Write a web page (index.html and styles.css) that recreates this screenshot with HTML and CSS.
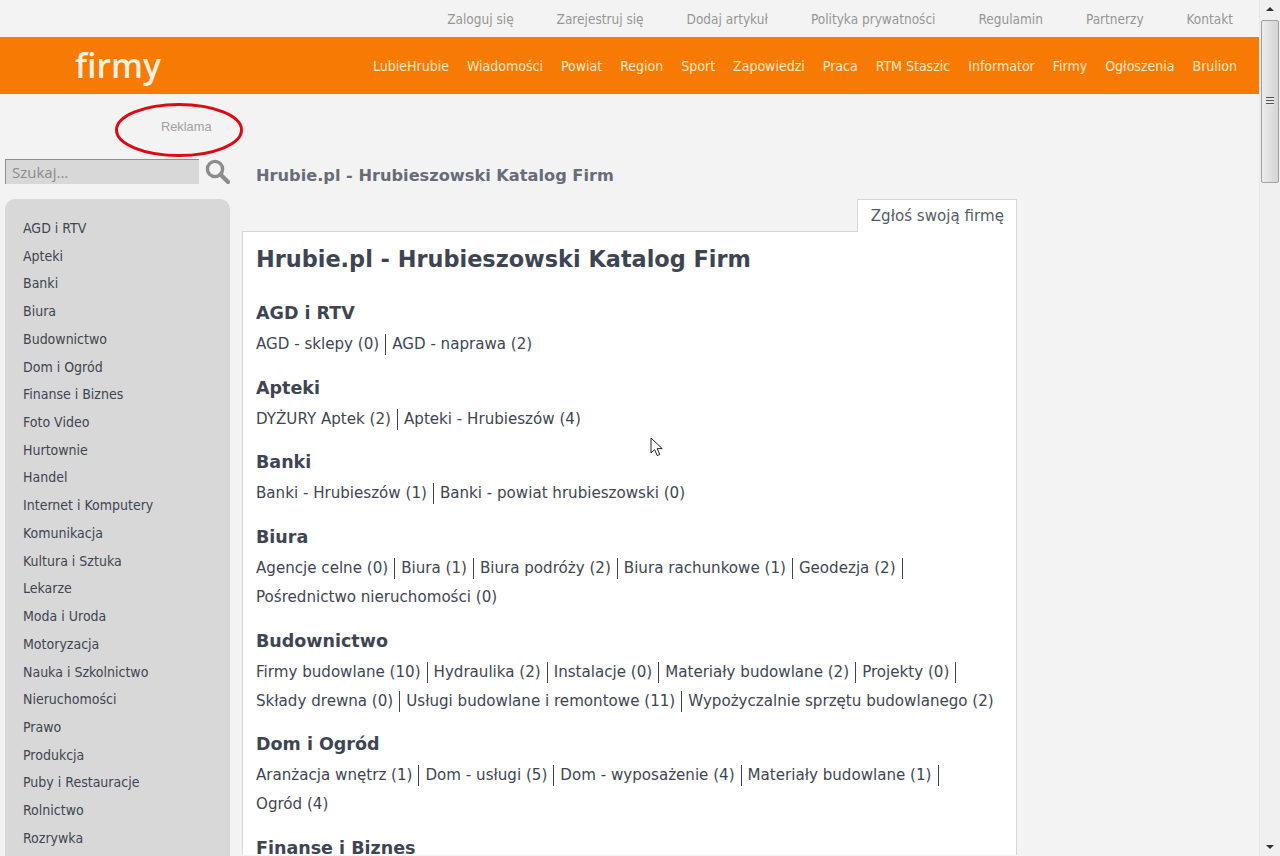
FILE: index.html
```html
<!DOCTYPE html>
<html lang="pl">
<head>
    <meta charset="UTF-8">
    <meta name="viewport" content="width=device-width, initial-scale=1.0">
    <title>Hrubie.pl - Hrubieszowski Katalog Firm</title>
    <link rel="stylesheet" href="styles.css">
</head>
<body>
<div class="viewport">
    <div class="page">
        <div class="top-links">
            <a>Zaloguj się</a>
            <a>Zarejestruj się</a>
            <a>Dodaj artykuł</a>
            <a>Polityka prywatności</a>
            <a>Regulamin</a>
            <a>Partnerzy</a>
            <a>Kontakt</a>
        </div>
        <div class="header">
            <div class="logo">firmy</div>
            <div class="main-nav">
                <a>LubieHrubie</a>
                <a>Wiadomości</a>
                <a>Powiat</a>
                <a>Region</a>
                <a>Sport</a>
                <a>Zapowiedzi</a>
                <a>Praca</a>
                <a>RTM Staszic</a>
                <a>Informator</a>
                <a>Firmy</a>
                <a>Ogłoszenia</a>
                <a>Brulion</a>
            </div>
        </div>
        <div class="ad-slot">
            <span class="ad-label">Reklama</span>
            <svg class="ad-ring" width="132" height="58" viewBox="0 0 132 58">
                <ellipse cx="66" cy="29" rx="62.5" ry="25.5" fill="none" stroke="#dc0a14" stroke-width="3"/>
            </svg>
        </div>
        <div class="columns">
            <div class="left-col">
                <div class="search">
                    <div class="search-input">Szukaj...</div>
                    <svg class="search-icon" width="25" height="25" viewBox="0 0 25 25">
                        <circle cx="10" cy="10" r="7.6" fill="none" stroke="#8c8c8c" stroke-width="3.4"/>
                        <path d="M15.5 15.5l7.5 7.5" stroke="#8c8c8c" stroke-width="4.2" stroke-linecap="round"/>
                    </svg>
                </div>
                <div class="side-menu">
                    <a>AGD i RTV</a>
                    <a>Apteki</a>
                    <a>Banki</a>
                    <a>Biura</a>
                    <a>Budownictwo</a>
                    <a>Dom i Ogród</a>
                    <a>Finanse i Biznes</a>
                    <a>Foto Video</a>
                    <a>Hurtownie</a>
                    <a>Handel</a>
                    <a>Internet i Komputery</a>
                    <a>Komunikacja</a>
                    <a>Kultura i Sztuka</a>
                    <a>Lekarze</a>
                    <a>Moda i Uroda</a>
                    <a>Motoryzacja</a>
                    <a>Nauka i Szkolnictwo</a>
                    <a>Nieruchomości</a>
                    <a>Prawo</a>
                    <a>Produkcja</a>
                    <a>Puby i Restauracje</a>
                    <a>Rolnictwo</a>
                    <a>Rozrywka</a>
                </div>
            </div>
            <div class="content">
                <div class="crumb">Hrubie.pl - Hrubieszowski Katalog Firm</div>
                <div class="tabs"><a class="tab">Zgłoś swoją firmę</a></div>
                <div class="panel">
                    <h1>Hrubie.pl - Hrubieszowski Katalog Firm</h1>

                    <h2>AGD i RTV</h2>
                    <ul class="cats">
                        <li>AGD - sklepy (0)</li>
                        <li>AGD - naprawa (2)</li>
                    </ul>

                    <h2>Apteki</h2>
                    <ul class="cats">
                        <li>DYŻURY Aptek (2)</li>
                        <li>Apteki - Hrubieszów (4)</li>
                    </ul>

                    <h2>Banki</h2>
                    <ul class="cats">
                        <li>Banki - Hrubieszów (1)</li>
                        <li>Banki - powiat hrubieszowski (0)</li>
                    </ul>

                    <h2>Biura</h2>
                    <ul class="cats">
                        <li>Agencje celne (0)</li>
                        <li>Biura (1)</li>
                        <li>Biura podróży (2)</li>
                        <li>Biura rachunkowe (1)</li>
                        <li>Geodezja (2)</li>
                        <li>Pośrednictwo nieruchomości (0)</li>
                    </ul>

                    <h2>Budownictwo</h2>
                    <ul class="cats">
                        <li>Firmy budowlane (10)</li>
                        <li>Hydraulika (2)</li>
                        <li>Instalacje (0)</li>
                        <li>Materiały budowlane (2)</li>
                        <li>Projekty (0)</li>
                        <li>Składy drewna (0)</li>
                        <li>Usługi budowlane i remontowe (11)</li>
                        <li>Wypożyczalnie sprzętu budowlanego (2)</li>
                    </ul>

                    <h2>Dom i Ogród</h2>
                    <ul class="cats">
                        <li>Aranżacja wnętrz (1)</li>
                        <li>Dom - usługi (5)</li>
                        <li>Dom - wyposażenie (4)</li>
                        <li>Materiały budowlane (1)</li>
                        <li>Ogród (4)</li>
                    </ul>

                    <h2>Finanse i Biznes</h2>
                </div>
            </div>
        </div>
    </div>
    <div class="scrollbar">
        <div class="arrow arrow-up"></div>
        <div class="thumb"><div class="grip"></div></div>
        <div class="arrow arrow-down"></div>
    </div>
</div>
<!-- mouse pointer from the screenshot -->
<svg class="cursor" width="14" height="20" viewBox="0 0 14 20">
    <path d="M1 1v15l3.6-3.4 2.6 6 2.6-1.1-2.6-5.9h5z" fill="#fff" stroke="#222" stroke-width="1"/>
</svg>
</body>
</html>
```

FILE: styles.css
```css
html, body {
    margin: 0;
    height: 100%;
    overflow: hidden;
}
body {
    font-family: "DejaVu Sans", Verdana, sans-serif;
    background: #f3f3f3;
    color: #3e4552;
}
.viewport {
    display: flex;
    height: 856px;
}
.page {
    width: 1259px;
    height: 856px;
    overflow: hidden;
    flex: none;
}

/* top links */
.top-links {
    height: 37px;
    display: flex;
    justify-content: flex-end;
    align-items: center;
    gap: 43px;
    padding-right: 26px;
    box-sizing: border-box;
    font-family: "DejaVu Sans Condensed", "DejaVu Sans", sans-serif;
    font-size: 13.5px;
    font-stretch: condensed;
    color: #969696;
}

/* orange bar */
.header {
    height: 57px;
    background: #f77a05;
    display: flex;
    justify-content: space-between;
    align-items: center;
    padding: 0 22px 0 75px;
}
.logo {
    font-family: "Open Sans", sans-serif;
    font-size: 33.5px;
    font-weight: 600;
    line-height: 57px;
    color: #fdf0dc;
}
.main-nav {
    display: flex;
    gap: 18px;
    font-family: "DejaVu Sans Condensed", "DejaVu Sans", sans-serif;
    font-size: 14px;
    font-stretch: condensed;
    color: #ffe9c4;
}

/* ad */
.ad-slot {
    position: relative;
    height: 65px;
    font-family: "Liberation Sans", sans-serif;
    font-size: 12.8px;
    color: #a0a0a0;
}
.ad-label {
    position: absolute;
    left: 161px;
    top: 25px;
}
.ad-ring {
    position: absolute;
    left: 113px;
    top: 7px;
}

.columns {
    display: flex;
}
.left-col {
    width: 225px;
    margin-left: 5px;
    flex: none;
}

/* search */
.search {
    display: flex;
    align-items: center;
    justify-content: space-between;
    height: 25px;
}
.search-input {
    width: 194px;
    height: 25px;
    box-sizing: border-box;
    background: #d8d8d8;
    border-top: 1px solid #8f8f8f;
    border-left: 1px solid #8f8f8f;
    padding-left: 6px;
    font-family: "Open Sans", sans-serif;
    font-size: 15px;
    line-height: 24px;
    color: #8a8a8a;
}

/* categories */
.side-menu {
    margin-top: 15px;
    height: 700px;
    padding: 16px 18px 0;
    box-sizing: border-box;
    background: #d8d8d8;
    border-radius: 10px 10px 0 0;
    font-family: "DejaVu Sans Condensed", "DejaVu Sans", sans-serif;
    font-size: 14px;
    font-stretch: condensed;
    color: #3e4552;
}
.side-menu a {
    display: block;
    height: 27.72px;
    line-height: 27.72px;
}

/* main column */
.content {
    width: 775px;
    margin-left: 12px;
    flex: none;
}
.crumb {
    height: 40px;
    padding: 2px 0 0 14px;
    box-sizing: border-box;
    font-size: 16.2px;
    line-height: 30px;
    font-weight: bold;
    color: #666d78;
}
.tabs {
    display: flex;
    justify-content: flex-end;
    height: 33px;
    margin-bottom: -1px;
}
.tab {
    height: 33px;
    box-sizing: border-box;
    padding: 0 12px 0 13px;
    background: #fff;
    border: 1px solid #d6d6d6;
    border-bottom: none;
    font-size: 15.1px;
    line-height: 33px;
    color: #555b66;
}
.panel {
    background: #fff;
    border-left: 1px solid #d6d6d6;
    border-right: 1px solid #d6d6d6;
    border-top: 1px solid #d6d6d6;
    padding: 0 13px;
    height: 624px;
    box-sizing: border-box;
    overflow: hidden;
}
h1 {
    font-size: 22.4px;
    line-height: 32px;
    margin: 11px 0 29.3px;
}
h2 {
    font-size: 17.5px;
    line-height: 18px;
    margin: 0;
}
.cats {
    list-style: none;
    display: flex;
    flex-wrap: wrap;
    row-gap: 8px;
    margin: 12px 0 23.6px;
    padding: 0;
    font-size: 15.1px;
    line-height: 21px;
}
.cats li {
    padding-right: 6px;
    margin-right: 6px;
    border-right: 1px solid #3e4552;
}
.cats li:last-child {
    border-right: none;
    padding-right: 0;
    margin-right: 0;
}

/* scrollbar */
.scrollbar {
    width: 21px;
    height: 856px;
    background: #f0f0f0;
    border-left: 1px solid #e8e8e8;
    box-sizing: border-box;
    display: flex;
    flex-direction: column;
    align-items: center;
}
.arrow {
    width: 0;
    height: 0;
    border-left: 4px solid transparent;
    border-right: 4px solid transparent;
    flex: none;
}
.arrow-up {
    border-bottom: 4px solid #333;
    margin-top: 7px;
}
.arrow-down {
    border-top: 4px solid #333;
    margin-top: auto;
    margin-bottom: 7px;
}
.thumb {
    width: 18px;
    height: 163px;
    margin-top: 9px;
    box-sizing: border-box;
    border: 1px solid #a0a0a0;
    border-radius: 2px;
    background: linear-gradient(to right, #ececec, #d4d4d4);
    display: flex;
    align-items: center;
    justify-content: center;
}
.grip {
    width: 8px;
    height: 9px;
    background: repeating-linear-gradient(to bottom, #555 0, #555 1px, #e6e6e6 1px, #e6e6e6 3px);
}

.cursor {
    position: absolute;
    left: 650px;
    top: 437px;
}
.search-icon {
    flex: none;
}
```
